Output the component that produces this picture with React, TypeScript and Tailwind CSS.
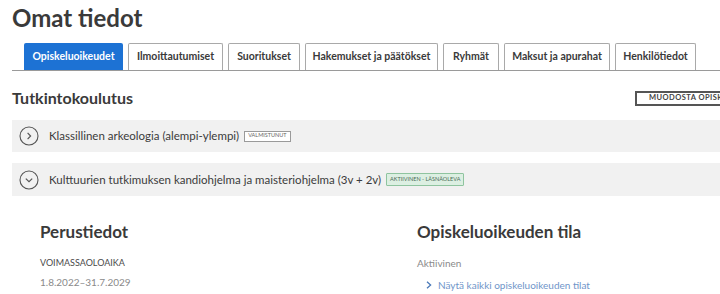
import React from "react";

const tabs: { label: string; w: string; active?: boolean }[] = [
  { label: "Opiskeluoikeudet", w: "w-[99px]", active: true },
  { label: "Ilmoittautumiset", w: "w-[95px]" },
  { label: "Suoritukset", w: "w-[72px]" },
  { label: "Hakemukset ja päätökset", w: "w-[133px]" },
  { label: "Ryhmät", w: "w-[56px]" },
  { label: "Maksut ja apurahat", w: "w-[106px]" },
  { label: "Henkilötiedot", w: "w-[81px]" },
];

function CircleChevron({ down }: { down?: boolean }) {
  return (
    <svg width="20" height="20" viewBox="0 0 20 20" className="shrink-0">
      <circle cx="10" cy="10" r="9" fill="none" stroke="#555" strokeWidth="1.1" />
      {down ? (
        <path d="M6.8 8.6 L10 11.6 L13.2 8.6" fill="none" stroke="#555" strokeWidth="1.2" />
      ) : (
        <path d="M8.6 6.8 L11.6 10 L8.6 13.2" fill="none" stroke="#555" strokeWidth="1.2" />
      )}
    </svg>
  );
}

export default function App() {
  return (
    <div
      className="w-[720px] h-[294px] overflow-hidden bg-white text-[#3b3b3b]"
      style={{ fontFamily: "Lato, 'Noto Sans', sans-serif" }}
    >
      <div className="w-[840px] pl-[12px]">
        <h1 className="text-[24px] font-bold leading-none pt-[6px] text-[#3a3a3a]">Omat tiedot</h1>

        <div className="mt-[13px] flex gap-[5px] pl-[12px] border-b border-[#9a9a9a]">
          {tabs.map((t) => (
            <div
              key={t.label}
              className={`${t.w} h-[27px] flex items-center justify-center rounded-t-[2px] text-[10.5px] font-bold ${
                t.active
                  ? "bg-[#1d72d4] text-white"
                  : "bg-white border border-b-0 border-[#a9a9a9] text-[#3a3a3a]"
              }`}
            >
              {t.label}
            </div>
          ))}
        </div>

        <div className="grid grid-cols-[623px_auto] items-center mt-[19px]">
          <h2 className="text-[16px] font-bold leading-none text-[#3a3a3a]">Tutkintokoulutus</h2>
          <div className="h-[15px] w-[190px] border-2 border-[#555] flex items-center pl-[12px] whitespace-nowrap text-[7.5px] font-bold tracking-[0.06em] text-[#444]">
            MUODOSTA OPISKELUOIKEUSTODISTUS
          </div>
        </div>

        <div className="mt-[14px] h-[32px] bg-[#f1f1f1] flex items-center pl-[7px] gap-[10px]">
          <CircleChevron />
          <div className="flex items-center gap-[5px]">
            <span className="text-[11.5px]">Klassillinen arkeologia (alempi-ylempi)</span>
            <span className="h-[11px] px-[3px] border border-[#9a9a9a] text-[5.5px] leading-none flex items-center text-[#666] bg-white">
              VALMISTUNUT
            </span>
          </div>
        </div>

        <div className="mt-[11px] h-[33px] bg-[#f1f1f1] flex items-center pl-[7px] gap-[10px]">
          <CircleChevron down />
          <div className="flex items-center gap-[5px]">
            <span className="text-[11.5px]">
              Kulttuurien tutkimuksen kandiohjelma ja maisteriohjelma (3v + 2v)
            </span>
            <span className="h-[13px] px-[3px] border border-[#8fc49f] rounded-[1px] bg-[#dcefe2] text-[5.5px] leading-none flex items-center text-[#4a6a55]">
              AKTIIVINEN - LÄSNÄOLEVA
            </span>
          </div>
        </div>

        <div className="grid grid-cols-[377px_1fr] pl-[28px] mt-[27px]">
          <div>
            <h3 className="text-[17px] font-bold leading-none text-[#3a3a3a]">Perustiedot</h3>
            <div className="mt-[18px] text-[9px] leading-none text-[#4a4a4a]">VOIMASSAOLOAIKA</div>
            <div className="mt-[10px] text-[10px] leading-none text-[#8a8a8a]">1.8.2022–31.7.2029</div>
          </div>
          <div>
            <h3 className="text-[17px] font-bold leading-none text-[#3a3a3a]">Opiskeluoikeuden tila</h3>
            <div className="mt-[18px] text-[10px] leading-none text-[#8a8a8a]">Aktiivinen</div>
            <div className="mt-[12px] pl-[9px] flex items-center gap-[6px] text-[10px] leading-none text-[#6f95c9]">
              <svg width="6" height="8" viewBox="0 0 6 8">
                <path d="M1 0.8 L4.6 4 L1 7.2" fill="none" stroke="#4a79b8" strokeWidth="1.3" />
              </svg>
              <span>Näytä kaikki opiskeluoikeuden tilat</span>
            </div>
          </div>
        </div>
      </div>
    </div>
  );
}
